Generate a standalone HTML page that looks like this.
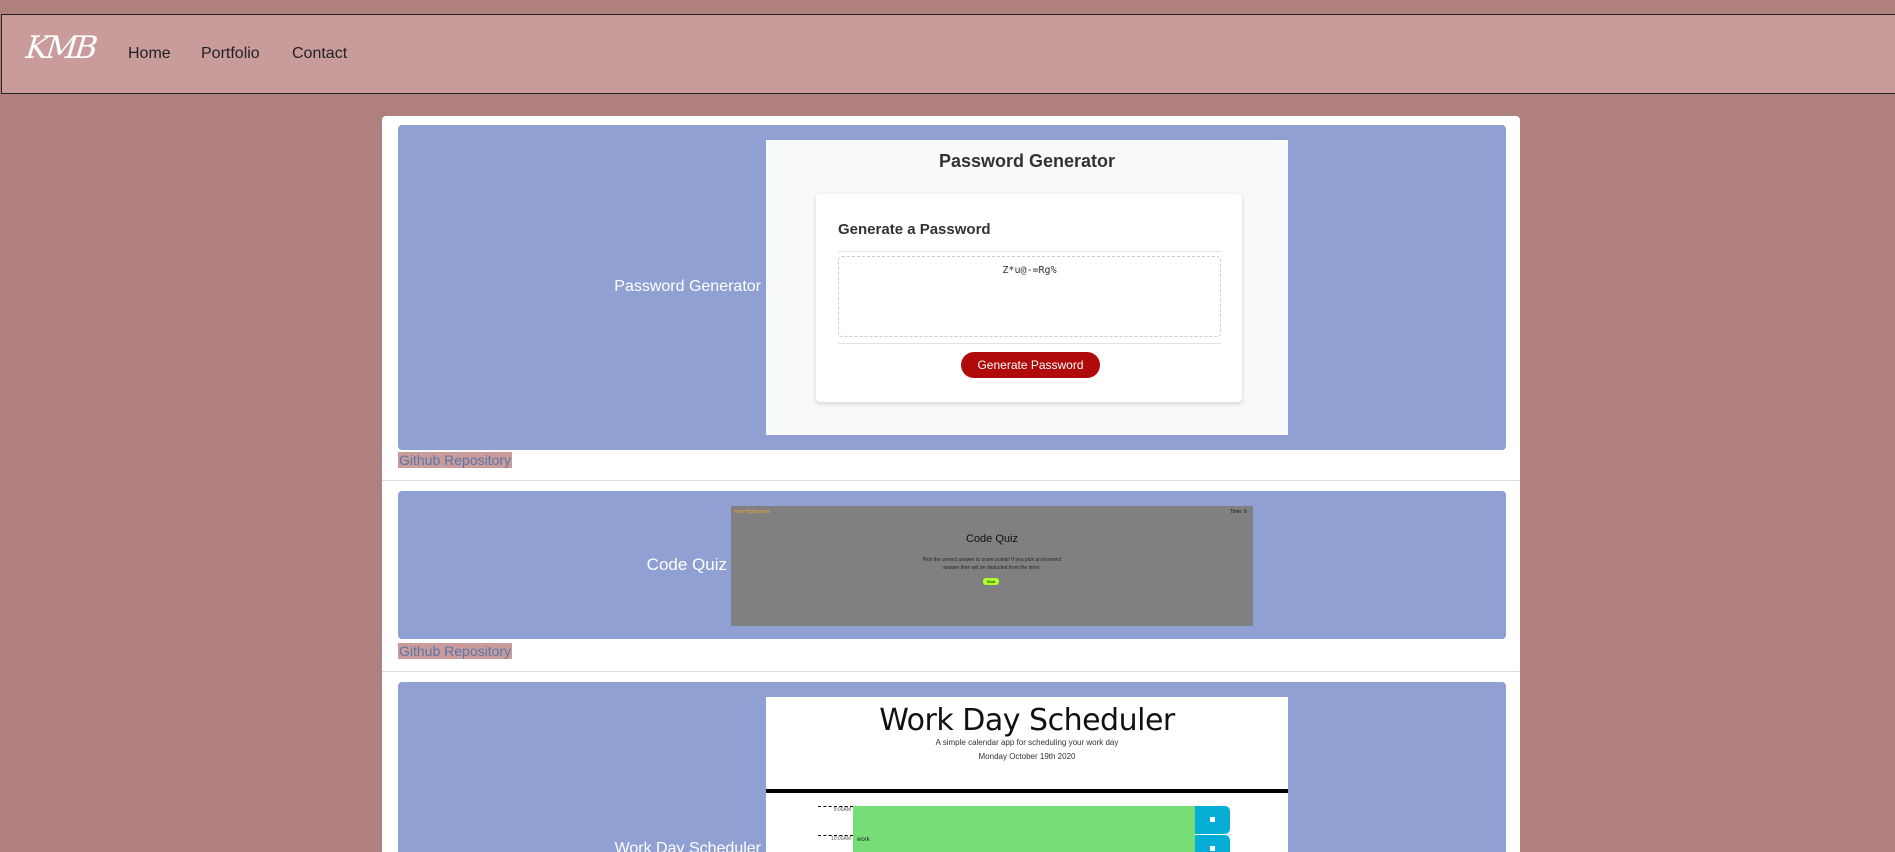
<!DOCTYPE html>
<html style="height:852px;overflow:hidden"><head><meta charset="utf-8"><style>
*{margin:0;padding:0;box-sizing:border-box}
body{width:1895px;height:852px;overflow:hidden;background:#b0807e;font-family:"Liberation Sans",Arial,sans-serif;position:relative}
.abs{position:absolute}
.nav{left:1px;top:14px;width:1894px;height:80px;background:#c99b9a;border:1px solid #222;border-right:none}
.logo{left:26px;top:30px;color:#fff;font:italic 31px "DejaVu Serif",serif;letter-spacing:-3px;transform:skewX(-6deg)}
.nl{top:45px;font-size:16px;color:#222}
.card{left:382px;top:116px;width:1138px;height:736px;background:#fff;border-radius:4px 4px 0 0}
.panel{background:#90a0d3;border-radius:4px}
.lbl{color:#fff;font-size:16px;text-align:right}
.gh{background:#c99b9a;color:#5577aa;font-size:14px;height:16px;line-height:16px;padding:0 1px}
.sep{height:1px;background:#ddd;left:382px;width:1138px}
</style></head><body>
<div class="abs nav"></div>
<div class="abs logo">KMB</div>
<div class="abs nl" style="left:128px">Home</div>
<div class="abs nl" style="left:201px">Portfolio</div>
<div class="abs nl" style="left:292px">Contact</div>

<div class="abs card"></div>

<!-- panel 1 -->
<div class="abs panel" style="left:398px;top:125px;width:1108px;height:325px"></div>
<div class="abs lbl" style="left:560px;top:278px;width:201px">Password Generator</div>
<div class="abs" style="left:766px;top:140px;width:522px;height:295px;background:#f8f9fa"></div>
<div class="abs" style="left:766px;top:151px;width:522px;text-align:center;font-weight:bold;font-size:18px;color:#333">Password Generator</div>
<div class="abs" style="left:816px;top:194px;width:426px;height:208px;background:#fff;border-radius:4px;box-shadow:0 2px 5px rgba(0,0,0,.15)"></div>
<div class="abs" style="left:838px;top:221px;font-weight:bold;font-size:15px;color:#333">Generate a Password</div>
<div class="abs" style="left:838px;top:251px;width:383px;height:1px;background:#e3e3e3"></div>
<div class="abs" style="left:838px;top:256px;width:383px;height:81px;border:1px dashed #ccc;border-radius:4px"></div>
<div class="abs" style="left:838px;top:265px;width:383px;text-align:center;font:10px 'DejaVu Sans Mono',monospace;color:#333">Z*u@-=Rg%</div>
<div class="abs" style="left:838px;top:343px;width:383px;height:1px;background:#e3e3e3"></div>
<div class="abs" style="left:961px;top:352px;width:139px;height:26px;background:#b00a0a;border-radius:13px;color:#fff;font-size:12px;text-align:center;line-height:26px">Generate Password</div>
<div class="abs gh" style="left:398px;top:452px">Github Repository</div>
<div class="abs sep" style="top:480px"></div>

<!-- panel 2 -->
<div class="abs panel" style="left:398px;top:491px;width:1108px;height:148px"></div>
<div class="abs lbl" style="left:560px;top:555px;width:167px;font-size:17px">Code Quiz</div>
<div class="abs" style="left:731px;top:506px;width:522px;height:120px;background:#808080"></div>
<div class="abs" style="left:733px;top:509px;font-size:5px;color:#e8a030">View Highscores</div>
<div class="abs" style="left:1230px;top:509px;font-size:5px;color:#111">Time: 0</div>
<div class="abs" style="left:731px;top:533px;width:522px;text-align:center;font-size:11px;color:#111">Code Quiz</div>
<div class="abs" style="left:731px;top:556px;width:522px;text-align:center;font-size:5px;line-height:8px;color:#222">Pick the correct answer to score points! If you pick an incorrect<br>answer time will be deducted from the timer.</div>
<div class="abs" style="left:983px;top:578px;width:16px;height:7px;background:#adff2f;border-radius:3px;font-size:4px;text-align:center;line-height:7px">Start</div>
<div class="abs gh" style="left:398px;top:643px">Github Repository</div>
<div class="abs sep" style="top:671px"></div>

<!-- panel 3 -->
<div class="abs panel" style="left:398px;top:682px;width:1108px;height:170px;border-radius:4px 4px 0 0"></div>
<div class="abs lbl" style="left:560px;top:840px;width:201px">Work Day Scheduler</div>
<div class="abs" style="left:766px;top:697px;width:522px;height:155px;background:#fff"></div>
<div class="abs" style="left:766px;top:703px;width:522px;text-align:center;font:30px 'DejaVu Sans',sans-serif;color:#111;letter-spacing:-0.5px">Work Day Scheduler</div>
<div class="abs" style="left:766px;top:738px;width:522px;text-align:center;font-size:8px;color:#333">A simple calendar app for scheduling your work day</div>
<div class="abs" style="left:766px;top:752px;width:522px;text-align:center;font-size:8px;color:#333">Monday October 19th 2020</div>
<div class="abs" style="left:766px;top:789px;width:522px;height:4px;background:#000"></div>
<div class="abs" style="left:818px;top:806px;width:35px;border-top:1px dashed #000;font-size:5px;color:#555;text-align:right;padding-right:2px">9:00AM</div>
<div class="abs" style="left:818px;top:835px;width:35px;border-top:1px dashed #000;font-size:5px;color:#555;text-align:right;padding-right:2px">10:00AM</div>
<div class="abs" style="left:853px;top:806px;width:342px;height:46px;background:#77dd77"></div>
<div class="abs" style="left:857px;top:837px;font-size:6px;color:#222">work</div>
<div class="abs" style="left:1195px;top:806px;width:35px;height:28px;background:#06aed5;border-radius:0 5px 5px 0"></div>
<div class="abs" style="left:1195px;top:835px;width:35px;height:17px;background:#06aed5;border-radius:0 5px 0 0"></div>
<div class="abs" style="left:1210px;top:817px;width:5px;height:5px;background:#fff"></div>
<div class="abs" style="left:1210px;top:846px;width:5px;height:5px;background:#fff"></div>
</body></html>
